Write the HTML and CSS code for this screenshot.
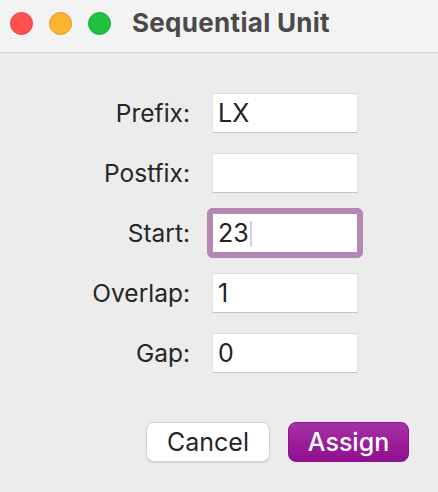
FILE: index.html
```html
<!DOCTYPE html>
<html>
<head>
<meta charset="utf-8">
<link rel="stylesheet" href="styles.css">
</head>
<body>
<div class="window">
  <div class="titlebar">
    <div class="lights">
      <span class="light red"></span>
      <span class="light yellow"></span>
      <span class="light green"></span>
    </div>
    <div class="title">Sequential Unit</div>
  </div>
  <div class="content">
    <div class="form">
      <label class="label">Prefix:</label>
      <div class="field">LX</div>
      <label class="label">Postfix:</label>
      <div class="field"></div>
      <label class="label">Start:</label>
      <div class="field focused">23<span class="caret"></span></div>
      <label class="label">Overlap:</label>
      <div class="field">1</div>
      <label class="label">Gap:</label>
      <div class="field">0</div>
    </div>
    <div class="buttons">
      <button class="btn cancel">Cancel</button>
      <button class="btn assign">Assign</button>
    </div>
  </div>
</div>
</body>
</html>
```
FILE: styles.css
```css
html, body {
  margin: 0;
  padding: 0;
}
body {
  width: 438px;
  height: 492px;
  background: #ececec;
  font-family: Inter, "Liberation Sans", sans-serif;
  overflow: hidden;
}
.window {
  width: 438px;
  height: 492px;
  background: #ececec;
}
.titlebar {
  height: 52px;
  background: #f3f3f3;
  border-bottom: 1px solid #d2d2d2;
  display: flex;
  align-items: center;
}
.lights {
  display: flex;
  gap: 16px;
  padding-left: 10px;
  margin-top: -6px;
}
.light {
  width: 23px;
  height: 23px;
  border-radius: 50%;
  box-sizing: border-box;
}
.red { background: #ff4f4f; border: 1px solid #e0443e; }
.yellow { background: #ffb42e; border: 1px solid #de9a24; }
.green { background: #20c040; border: 1px solid #1aab29; }
.title {
  margin-left: 21px;
  margin-top: -7px;
  font-size: 26px;
  font-weight: 700;
  color: #4a4a4a;
  letter-spacing: 0.3px;
}
.content {
  padding-top: 40px;
}
.form {
  display: grid;
  grid-template-columns: 190px 146px;
  column-gap: 22px;
  row-gap: 20px;
}
.label {
  justify-self: end;
  align-self: center;
  font-size: 24.5px;
  color: #262626;
}
.field {
  position: relative;
  height: 40px;
  box-sizing: border-box;
  background: #fff;
  border-top: 1px solid #dcdcdc;
  border-left: 1px solid #e2e2e2;
  border-right: 1px solid #e2e2e2;
  border-bottom: 1px solid #c4c4c4;
  font-size: 25px;
  color: #232323;
  line-height: 38px;
  padding-left: 5px;
}
.field.focused {
  outline: 5px solid #b487b4;
  outline-offset: 0;
  border-radius: 1px;
  border-color: #b487b4;
}
.field.focused::before {
  content: "";
  position: absolute;
  inset: -6px;
  border-radius: 6px;
  border: 1px solid #b487b4;
  pointer-events: none;
}
.caret {
  display: inline-block;
  width: 2px;
  height: 26px;
  background: #e2c9e2;
  vertical-align: -5px;
  margin-left: 1px;
}
.buttons {
  display: flex;
  justify-content: flex-end;
  gap: 18px;
  padding-right: 29px;
  margin-top: 49px;
}
.btn {
  height: 40px;
  border-radius: 8px;
  font-family: Inter, "Liberation Sans", sans-serif;
  font-size: 25px;
  padding: 0;
  box-sizing: border-box;
}
.cancel {
  width: 124px;
  background: #fff;
  color: #262626;
  border: 1px solid #d4d4d4;
  box-shadow: 0 1px 1px rgba(0,0,0,0.12);
}
.assign {
  width: 121px;
  background: linear-gradient(#a630a6, #8f0f8f);
  color: #fff;
  border: 1px solid #8a128a;
  font-weight: 500;
}
```
